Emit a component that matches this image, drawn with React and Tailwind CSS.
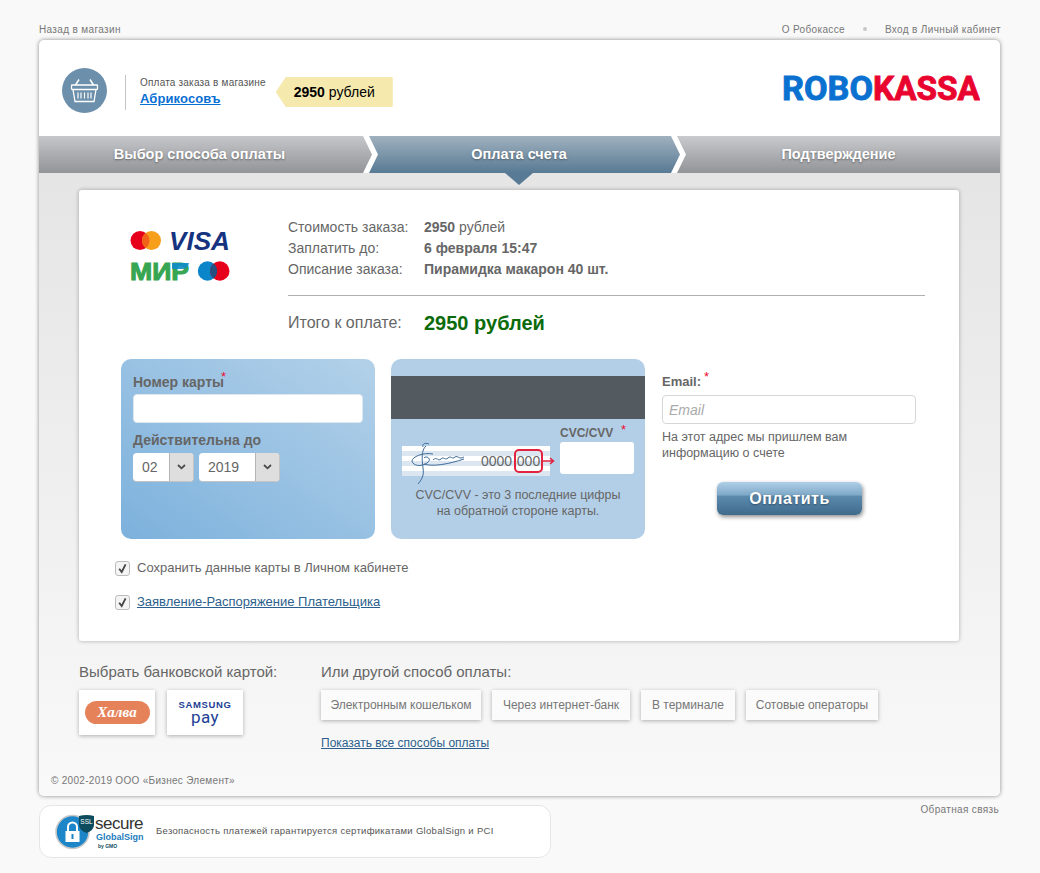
import React from "react";

const Star = ({ className = "" }) => <span className={`absolute text-[#e8102c] font-normal text-[13px] leading-none ${className}`}>*</span>;

function Basket() {
  return (
    <svg width="45" height="45" viewBox="0 0 45 45" className="shrink-0">
      <circle cx="22.5" cy="22.5" r="22.5" fill="#6c8fac" />
      <g fill="none" stroke="#fff" strokeWidth="1.3">
        <path d="M17 11.5 L13.5 17 M28 11.5 L31.5 17" strokeWidth="1.5" />
        <rect x="9.5" y="17" width="26" height="4.5" rx="0.8" />
        <path d="M11 21.5 L13 33.5 H32 L34 21.5" />
        <path d="M16 24.5 V30.5 M19 24.5 V30.5 M22.5 24.5 V30.5 M26 24.5 V30.5 M29 24.5 V30.5" strokeWidth="1.2" />
      </g>
    </svg>
  );
}

function Logo() {
  const style = { fontFamily: "Roboto, 'Liberation Sans', sans-serif", fontWeight: 700, fontSize: 34 };
  return (
    <svg width="198" height="26" viewBox="0 0 198 26" className="shrink-0">
      <text x="0" y="24.5" textLength="91" lengthAdjust="spacingAndGlyphs" fill="#0a71d0" stroke="#0a71d0" strokeWidth="0.9" style={style}>ROBO</text>
      <text x="91" y="24.5" textLength="107" lengthAdjust="spacingAndGlyphs" fill="#e9042f" stroke="#e9042f" strokeWidth="0.9" style={style}>KASSA</text>
    </svg>
  );
}

function CardLogos() {
  return (
    <svg width="100" height="52" viewBox="0 0 100 52" className="shrink-0">
      <circle cx="10" cy="10.5" r="9.5" fill="#e7001b" />
      <circle cx="21.5" cy="10.5" r="9.5" fill="#f79e1b" />
      <path d="M15.75 3 a9.5 9.5 0 0 1 0 15 a9.5 9.5 0 0 1 0 -15" fill="#f2631a" />
      <text x="39" y="19.5" textLength="61" lengthAdjust="spacingAndGlyphs" fill="#15337f" style={{ fontFamily: "'Liberation Sans', sans-serif", fontWeight: 700, fontStyle: "italic", fontSize: 26 }}>VISA</text>
      <text x="0" y="50" textLength="59" lengthAdjust="spacingAndGlyphs" fill="#37a652" stroke="#37a652" strokeWidth="1" style={{ fontFamily: "'Liberation Sans', sans-serif", fontWeight: 700, fontSize: 24 }}>МИР</text>
      <path d="M42 33 H59 Q58 39 52 39 H42 Z" fill="#0d8cc9" opacity="0.9" />
      <circle cx="77.5" cy="41" r="9.7" fill="#0a85c9" />
      <circle cx="89.8" cy="41" r="9.7" fill="#e7001b" />
      <path d="M83.6 33.5 a9.7 9.7 0 0 1 0 15 a9.7 9.7 0 0 1 0 -15" fill="#26507f" />
    </svg>
  );
}

function Select({ value, w, tw }) {
  return (
    <div className={`flex h-[29px] rounded-[4px] bg-white overflow-hidden border-r border-b border-[#c4c4c4] ${w}`}>
      <div className="flex-1 flex items-center pl-[9px] text-[14px] text-[#666]">{value}</div>
      <div className={`${tw} flex items-center justify-center bg-[#dedede] border-l border-[#b5b5b5]`}>
        <svg width="9" height="6" viewBox="0 0 9 6"><path d="M1 1 L4.5 4.3 L8 1" fill="none" stroke="#4b4b4b" strokeWidth="1.8" /></svg>
      </div>
    </div>
  );
}

function Check() {
  return (
    <span className="w-[15px] h-[15px] shrink-0 rounded-[3px] border border-[#bdbdbd] bg-[#f4f4f4] flex items-center justify-center">
      <svg width="11" height="11" viewBox="0 0 11 11"><path d="M2.2 5.8 L4.7 9 L8.6 1.3" fill="none" stroke="#444" strokeWidth="1.8" /></svg>
    </span>
  );
}

function Signature() {
  return (
    <svg width="58" height="44" viewBox="0 0 58 44" className="absolute left-[7px] top-[-4px]">
      <path d="M17 4 C12 8 13 18 14 26 C15 32 14 36 9 42 M20 2 C15 0 13 3 14 5 M24 12 C14 10 3 15 3 19 C4 24 12 25 18 21 C24 17 17 13 15 16 M15 22 C24 25 40 22 55 17 M24 18 C28 14 29 20 32 17 C35 14 36 19 39 16 C42 13 43 18 46 15 C49 13 50 18 55 15"
        fill="none" stroke="#3f6c99" strokeWidth="1" />
    </svg>
  );
}

function Secure() {
  return (
    <div className="relative w-[90px] h-[36px] shrink-0">
      <svg width="36" height="36" viewBox="0 0 36 36" className="absolute left-0 top-0">
        <circle cx="17.5" cy="18" r="16.5" fill="#1c86c8" stroke="#c9c9c9" strokeWidth="1.6" />
        <rect x="10.5" y="17" width="14" height="11" fill="#fff" />
        <path d="M13 17 V13 a4.5 4.5 0 0 1 9 0 V17" fill="none" stroke="#fff" strokeWidth="2" />
        <rect x="16.5" y="20" width="2" height="5" fill="#1c86c8" />
      </svg>
      <svg width="15" height="19" viewBox="0 0 15 19" className="absolute left-[24px] top-0">
        <path d="M0 2 Q7.5 0 15 2 V11 Q15 16 7.5 19 Q0 16 0 11 Z" fill="#0d4c5e" />
        <text x="7.5" y="10" textAnchor="middle" fill="#fff" style={{ fontFamily: "'Liberation Sans', sans-serif", fontSize: 6.5 }}>SSL</text>
      </svg>
      <span className="absolute left-[40px] top-[1px] text-[17px] leading-[17px] tracking-[-0.5px] text-[#333]">secure</span>
      <span className="absolute left-[41px] top-[18px] text-[9px] leading-[10px] font-bold text-[#1c7dbd]">GlobalSign</span>
      <span className="absolute left-[43px] top-[29px] text-[5px] leading-[6px] font-bold text-[#0d4c5e]">by GMO</span>
    </div>
  );
}

export default function App() {
  return (
    <div className="w-[1040px] min-h-[873px] bg-[#f9f9f9] px-[39px] pt-[22px] font-['Liberation_Sans',Arial,sans-serif] text-[#666]">
      <div className="flex justify-between items-center h-[14px] mb-[4px] text-[10px] tracking-[0.35px] text-[#777]">
        <span>Назад в магазин</span>
        <div className="flex items-center">
          <span>О Робокассе</span>
          <span className="w-[4px] h-[4px] rounded-full bg-[#c8c8c8] mx-[18px]" />
          <span>Вход в Личный кабинет</span>
        </div>
      </div>

      <div className="w-[961px] h-[756px] rounded-[5px] overflow-hidden shadow-[0_0_4px_rgba(0,0,0,0.45)] flex flex-col bg-white">
        <div className="h-[96px] flex items-start pt-[28px] pl-[23px] pr-[20px] shrink-0">
          <Basket />
          <div className="w-px h-[35px] bg-[#c4c4c4] ml-[18px] mt-[7px]" />
          <div className="ml-[14px] mt-[8px]">
            <div className="text-[10px] leading-[14px] tracking-[0.2px] text-[#555]">Оплата заказа в магазине</div>
            <div className="text-[13px] leading-[16px] mt-[1px] font-bold underline text-[#0a6fd2] tracking-[0.1px]">Абрикосовъ</div>
          </div>
          <div className="ml-[10px] mt-[9px] w-[117px] h-[30px] bg-[#f5e9ae] [clip-path:polygon(10px_0,100%_0,100%_100%,10px_100%,0_50%)] flex items-center pl-[18px] text-[14px] text-black">
            <b>2950</b>&nbsp;рублей
          </div>
          <div className="ml-auto mt-[7px]"><Logo /></div>
        </div>

        <div className="relative h-[37px] flex shrink-0 bg-white text-white font-bold text-[14.5px] [text-shadow:0_1px_2px_rgba(60,60,60,0.6)]">
          <div className="w-[333px] pr-[12px] flex items-center justify-center bg-gradient-to-b from-[#c6c7cb] to-[#929497] [clip-path:polygon(0_0,324px_0,333px_50%,324px_100%,0_100%)]">Выбор способа оплаты</div>
          <div className="w-[311px] -ml-[3px] pr-[11px] flex items-center justify-center bg-gradient-to-b from-[#a0b1bf] to-[#587a94] [clip-path:polygon(0_0,302px_0,311px_50%,302px_100%,0_100%,9px_50%)]">Оплата счета</div>
          <div className="flex-1 -ml-[3px] flex items-center justify-center bg-gradient-to-b from-[#c9cace] to-[#929497] [clip-path:polygon(0_0,100%_0,100%_100%,0_100%,9px_50%)]">Подтверждение</div>
          <div className="absolute left-[466px] top-[37px] w-[28px] h-[12px] bg-[#587a94] [clip-path:polygon(0_0,100%_0,50%_100%)]" />
        </div>

        <div className="flex-1 flex flex-col bg-gradient-to-b from-[#e5e5e5] to-[#f9f9f9] px-[40px] pt-[17px]">
          <div className="w-[880px] h-[451px] shrink-0 bg-white rounded-[3px] shadow-[0_0_4px_rgba(0,0,0,0.3)]">
            <div className="flex pl-[51px] pr-[34px] pt-[27px]">
              <div className="w-[158px] pt-[13px] shrink-0"><CardLogos /></div>
              <div className="flex-1">
                <div className="text-[14px] leading-[21px]">
                  <div className="flex"><span className="w-[136px]">Стоимость заказа:</span><span><b>2950</b> рублей</span></div>
                  <div className="flex"><span className="w-[136px]">Заплатить до:</span><b>6 февраля 15:47</b></div>
                  <div className="flex"><span className="w-[136px]">Описание заказа:</span><b>Пирамидка макарон 40 шт.</b></div>
                </div>
                <div className="h-px bg-[#b0b0b0] mt-[15px]" />
                <div className="flex items-center h-[28px] mt-[13px]">
                  <span className="w-[136px] text-[16px]">Итого к оплате:</span>
                  <b className="text-[20px] text-[#0b6b0b]">2950 рублей</b>
                </div>
              </div>
            </div>

            <div className="flex ml-[42px] mt-[22px] h-[180px]">
              <div className="w-[254px] rounded-[10px] bg-gradient-to-tr from-[#7cb1dc] to-[#b3d1e9] px-[12px] pt-[14px]">
                <div className="relative text-[14px] leading-[18px] font-bold">Номер карты<Star className="left-[88px] -top-[3px]" /></div>
                <div className="mt-[3px] h-[29px] w-[230px] rounded-[4px] bg-white border border-[#dfe7ee]" />
                <div className="text-[14px] leading-[18px] font-bold mt-[8px]">Действительна до</div>
                <div className="flex gap-[5px] mt-[4px]">
                  <Select value="02" w="w-[61px]" tw="w-[24px]" />
                  <Select value="2019" w="w-[81px]" tw="w-[24px]" />
                </div>
              </div>

              <div className="ml-[16px] w-[254px] rounded-[10px] overflow-hidden bg-[#b3cfe8] flex flex-col">
                <div className="h-[43px] mt-[17px] bg-[#535a60] shrink-0" />
                <div className="flex items-start pl-[11px] pr-[11px] mt-[15px]">
                  <div className="w-[148px] mt-[12px] relative">
                    <div className="h-[30px] bg-[repeating-linear-gradient(180deg,#ffffff_0,#ffffff_5px,#dce6f1_5px,#dce6f1_10px)]" />
                    <Signature />
                    <div className="absolute left-[79px] top-0 h-[30px] flex items-center text-[14px] text-[#666]">0000</div>
                    <div className="absolute left-[112px] top-[3px] w-[29px] h-[24px] rounded-[5px] border-2 border-[#e3223f] flex items-center justify-center text-[14px] text-[#666]">000</div>
                    <svg width="12" height="8" viewBox="0 0 12 8" className="absolute left-[141px] top-[11px]">
                      <path d="M0 4 H10 M7 1 L10.5 4 L7 7" fill="none" stroke="#e3223f" strokeWidth="1.5" />
                    </svg>
                  </div>
                  <div className="ml-[10px] w-[74px]">
                    <div className="relative text-[12px] leading-[14px] font-bold whitespace-nowrap -mt-[8px]">CVC/CVV<Star className="left-[61px] -top-[3px]" /></div>
                    <div className="mt-[2px] h-[32px] rounded-[3px] bg-white" />
                  </div>
                </div>
                <div className="text-[12.5px] leading-[16px] text-center mt-[11px]">CVC/CVV - это 3 последние цифры<br />на обратной стороне карты.</div>
              </div>

              <div className="ml-[17px] w-[254px]">
                <div className="relative text-[13px] leading-[16px] font-bold mt-[15px]">Email:<Star className="left-[42px] -top-[4px]" /></div>
                <input placeholder="Email" className="mt-[5px] block w-[254px] h-[29px] rounded-[4px] border border-[#d6d6d6] bg-white px-[6px] text-[14px] italic outline-none placeholder:text-[#aaa]" />
                <div className="text-[12.5px] leading-[16px] mt-[5px]">На этот адрес мы пришлем вам<br />информацию о счете</div>
                <button className="block mx-auto mt-[21px] ml-[55px] w-[145px] h-[33px] rounded-[6px] bg-[linear-gradient(180deg,#afcfe7_0%,#7ea8c7_40%,#5c8bae_42%,#3f6a8c_100%)] shadow-[1px_2px_4px_rgba(0,0,0,0.45)] text-white font-bold text-[16px] tracking-[0.5px] [text-shadow:0_1px_2px_rgba(40,60,80,0.7)]">Оплатить</button>
              </div>
            </div>

            <div className="ml-[36px] mt-[21px] flex items-center gap-[7px] h-[16px] text-[13px]">
              <Check /><span>Сохранить данные карты в Личном кабинете</span>
            </div>
            <div className="ml-[36px] mt-[18px] flex items-center gap-[7px] h-[16px] text-[13px]">
              <Check /><span className="underline text-[#2c5f8d]">Заявление-Распоряжение Плательщика</span>
            </div>
          </div>

          <div className="flex mt-[22px]">
            <div className="w-[242px] shrink-0">
              <div className="text-[15px] leading-[18px]">Выбрать банковской картой:</div>
              <div className="flex gap-[12px] mt-[9px]">
                <div className="w-[76px] h-[45px] bg-white shadow-[0_1px_4px_rgba(0,0,0,0.3)] flex items-center justify-center">
                  <div className="w-[65px] h-[23px] rounded-full bg-[#e6825a] flex items-center justify-center text-white text-[15px] font-bold italic font-['Liberation_Serif',serif]">Халва</div>
                </div>
                <div className="w-[76px] h-[45px] bg-white shadow-[0_1px_4px_rgba(0,0,0,0.3)] flex flex-col items-center justify-center text-[#1c3f94]">
                  <span className="text-[9.5px] leading-[10px] font-bold tracking-[0.6px]">SAMSUNG</span>
                  <span className="text-[17px] leading-[15px] font-['Roboto',sans-serif] tracking-[0.5px]">pay</span>
                </div>
              </div>
            </div>
            <div>
              <div className="text-[15px] leading-[18px]">Или другой способ оплаты:</div>
              <div className="flex mt-[9px] text-[12px] text-[#777]">
                <div className="w-[160px] h-[30px] bg-[#fbfbfb] shadow-[0_1px_4px_rgba(0,0,0,0.3)] flex items-center justify-center">Электронным кошельком</div>
                <div className="w-[138px] h-[30px] ml-[11px] bg-[#fbfbfb] shadow-[0_1px_4px_rgba(0,0,0,0.3)] flex items-center justify-center">Через интернет-банк</div>
                <div className="w-[94px] h-[30px] ml-[11px] bg-[#fbfbfb] shadow-[0_1px_4px_rgba(0,0,0,0.3)] flex items-center justify-center">В терминале</div>
                <div className="w-[132px] h-[30px] ml-[11px] bg-[#fbfbfb] shadow-[0_1px_4px_rgba(0,0,0,0.3)] flex items-center justify-center">Сотовые операторы</div>
              </div>
              <div className="mt-[15px] text-[12px] leading-[16px] underline text-[#2c5f8d]">Показать все способы оплаты</div>
            </div>
          </div>

          <div className="mt-auto mb-[9px] -ml-[28px] text-[10px] leading-[12px] tracking-[0.3px] text-[#777]">© 2002-2019 ООО «Бизнес Элемент»</div>
        </div>
      </div>

      <div className="flex justify-between items-start mt-[10px]">
        <div className="w-[512px] h-[53px] rounded-[12px] border border-[#e6e6e6] bg-white flex items-center pl-[15px] -mt-px">
          <Secure />
          <span className="text-[9.5px] tracking-[0.3px] text-[#555] ml-[11px]">Безопасность платежей гарантируется сертификатами GlobalSign и PCI</span>
        </div>
        <span className="text-[10px] tracking-[0.35px] text-[#777] -mt-[4px] mr-[2px]">Обратная связь</span>
      </div>
    </div>
  );
}
